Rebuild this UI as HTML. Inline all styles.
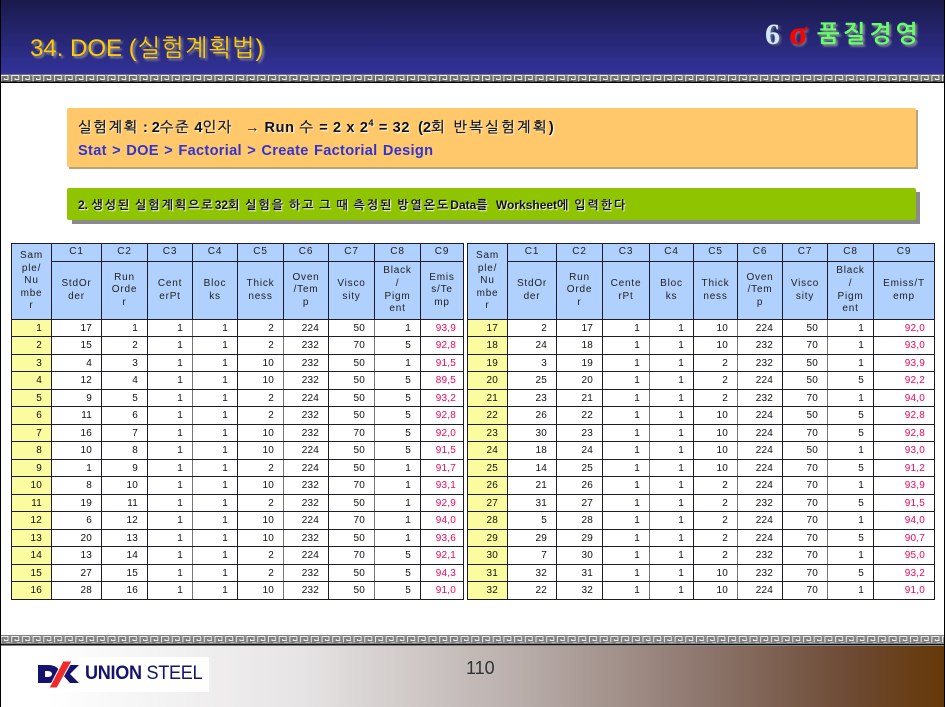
<!DOCTYPE html>
<html lang="ko"><head><meta charset="utf-8"><title>34. DOE</title>
<style>
html,body{margin:0;padding:0;background:#fff}
body{width:945px;height:707px;position:relative;overflow:hidden;font-family:"Liberation Sans","NanumGothic","Noto Sans CJK KR",sans-serif}
.abs{position:absolute;white-space:nowrap}
#hdr{left:0;top:0;width:945px;height:74px;background:linear-gradient(#1a1a4c,#32329a)}
#ftr{left:0;top:646px;width:945px;height:61px;background:linear-gradient(90deg,#fff 0%,#fff 5%,#e6e4e4 32%,#b9aeab 55%,#8a7268 76%,#6d4a34 90%,#663808 100%)}
table{position:absolute;top:243px;border-collapse:collapse;table-layout:fixed;font-size:10px;color:#111}
td{border:1px solid #1c1c2c;padding:0 9px 0 0;text-align:right;height:17px;line-height:11px;overflow:hidden;background:#fff;box-sizing:border-box;letter-spacing:.2px}
tr:nth-child(even) td{height:18px}
tr.h td{background:#b0d0fd;text-align:center;padding:0;letter-spacing:.8px;line-height:12.6px;color:#222}
tr.c td{height:18px}
tr.n td{height:58px}
td.s{background:#fbfb9f!important;padding-right:9px}
td.r{color:#f4045e;padding-right:7px}
.b td.r{padding-right:9px}
td.g{border-left-color:#777;border-right-color:#777}
.k1{letter-spacing:1.6px;font-weight:normal;-webkit-text-stroke:.3px #111}
.k2{letter-spacing:2px;word-spacing:-1.5px}
</style></head><body>
<div class="abs" id="hdr"></div>
<svg class="abs" style="left:0;top:74px" width="945" height="9"><defs><pattern id="k" width="10.7" height="8" patternUnits="userSpaceOnUse"><rect width="10.7" height="8" fill="#6e6e6e"/><path d="M1 7.5V1.5H8V5.5H4.5V4" fill="none" stroke="#eee" stroke-width="1"/><path d="M9.5 1.5H10.7M6 7.5H10" fill="none" stroke="#bbb" stroke-width="1"/></pattern></defs><rect width="945" height="7.5" fill="url(#k)"/><rect y="7.5" width="945" height="1.5" fill="#000"/></svg>
<svg class="abs" style="left:0;top:635px" width="945" height="11"><defs><pattern id="k2" width="10.7" height="9" patternUnits="userSpaceOnUse"><rect width="10.7" height="9" fill="#808080"/><path d="M1 7.5V1.5H8V5.5H4.5V4" fill="none" stroke="#eee" stroke-width="1"/><path d="M9.5 1.5H10.7M6 7.5H10" fill="none" stroke="#bbb" stroke-width="1"/></pattern></defs><rect width="945" height="9" fill="url(#k2)"/><rect y="9" width="945" height="1.5" fill="#111"/></svg>
<div class="abs" id="ftr"></div>
<div class="abs" style="left:0;top:0;width:1px;height:707px;background:#000"></div>
<div class="abs" style="left:944px;top:0;width:1px;height:707px;background:#000"></div>

<div class="abs" style="left:30px;top:35px;font-size:24px;line-height:28px;color:#ffcc00;text-shadow:2px 2px 2px #8f8f9c">34. DOE <span style="letter-spacing:1px">(실험계획법)</span></div>
<div class="abs" style="left:765px;top:18px;font:bold 30px/34px 'Liberation Serif',serif;color:#cfe6fb;text-shadow:2px 1px 2px #667">6</div>
<div class="abs" style="left:789px;top:17px;font:bold 34px/34px 'Liberation Serif',serif;color:#ff0000;text-shadow:1px 2px 2px #778">σ</div>
<div class="abs" style="left:817px;top:21px;font-size:24px;line-height:28px;font-weight:bold;letter-spacing:3.5px;color:#66ff66;text-shadow:2px 2px 2px #8f8f9c">품질경영</div>

<div class="abs" style="left:69px;top:110px;width:849px;height:59px;background:#b8a47c"></div>
<div class="abs" style="left:67px;top:108px;width:849px;height:59px;background:#ffc96b;border-radius:2px"></div>
<div class="abs" style="left:78px;top:118px;font-size:14.5px;line-height:20px;font-weight:bold;color:#111;text-shadow:1px 1px 1px #fff"><span class="k1">실험계획</span> : 2<span class="k1">수준</span> 4<span class="k1">인자</span> &nbsp;&nbsp;→<span style="letter-spacing:.65px;margin-left:5px">Run <span class="k1">수</span> = 2 x 2<sup style="font-size:9px;line-height:0">4</sup> = 32</span> &nbsp;(2<span class="k1" style="letter-spacing:2.3px">회 반복실험계획</span>)</div>
<div class="abs" style="left:78px;top:141px;font-size:14.6px;line-height:20px;font-weight:bold;color:#3333d0;word-spacing:1px;letter-spacing:.3px">Stat &gt; DOE &gt; Factorial &gt; Create Factorial Design</div>

<div class="abs" style="left:72px;top:192px;width:848px;height:32px;background:#8a8a8a"></div>
<div class="abs" style="left:67px;top:188px;width:849px;height:32px;background:#8fc400;border-radius:2px"></div>
<div class="abs" style="left:78px;top:197px;font-size:12px;line-height:16px;font-weight:bold;color:#111;text-shadow:1px 1px 1px #fff">2. <span class="k2">생성된 실험계획으로</span>32<span class="k2">회 실험을 하고 그 때 측정된 방열온도</span>Data<span class="k2">를</span><span style="margin-left:3px"> Worksheet</span><span class="k2">에 입력한다</span></div>

<table style="left:11px;width:452px"><colgroup><col style="width:40px"><col style="width:50px"><col style="width:46px"><col style="width:45px"><col style="width:45px"><col style="width:46px"><col style="width:45px"><col style="width:46px"><col style="width:46px"><col style="width:43px"></colgroup>
<tr class="h c"><td rowspan="2">Sam<br>ple/<br>Nu<br>mbe<br>r</td><td>C1</td><td>C2</td><td>C3</td><td>C4</td><td>C5</td><td>C6</td><td>C7</td><td>C8</td><td>C9</td></tr>
<tr class="h n"><td>StdOr<br>der</td><td>Run<br>Orde<br>r</td><td>Cent<br>erPt</td><td>Bloc<br>ks</td><td>Thick<br>ness</td><td>Oven<br>/Tem<br>p</td><td>Visco<br>sity</td><td>Black<br>/<br>Pigm<br>ent</td><td>Emis<br>s/Te<br>mp</td></tr>
<tr><td class="s">1</td><td>17</td><td>1</td><td class="g">1</td><td>1</td><td class="g">2</td><td>224</td><td class="g">50</td><td>1</td><td class="r">93,9</td></tr>
<tr><td class="s">2</td><td>15</td><td>2</td><td class="g">1</td><td>1</td><td class="g">2</td><td>232</td><td class="g">70</td><td>5</td><td class="r">92,8</td></tr>
<tr><td class="s">3</td><td>4</td><td>3</td><td class="g">1</td><td>1</td><td class="g">10</td><td>232</td><td class="g">50</td><td>1</td><td class="r">91,5</td></tr>
<tr><td class="s">4</td><td>12</td><td>4</td><td class="g">1</td><td>1</td><td class="g">10</td><td>232</td><td class="g">50</td><td>5</td><td class="r">89,5</td></tr>
<tr><td class="s">5</td><td>9</td><td>5</td><td class="g">1</td><td>1</td><td class="g">2</td><td>224</td><td class="g">50</td><td>5</td><td class="r">93,2</td></tr>
<tr><td class="s">6</td><td>11</td><td>6</td><td class="g">1</td><td>1</td><td class="g">2</td><td>232</td><td class="g">50</td><td>5</td><td class="r">92,8</td></tr>
<tr><td class="s">7</td><td>16</td><td>7</td><td class="g">1</td><td>1</td><td class="g">10</td><td>232</td><td class="g">70</td><td>5</td><td class="r">92,0</td></tr>
<tr><td class="s">8</td><td>10</td><td>8</td><td class="g">1</td><td>1</td><td class="g">10</td><td>224</td><td class="g">50</td><td>5</td><td class="r">91,5</td></tr>
<tr><td class="s">9</td><td>1</td><td>9</td><td class="g">1</td><td>1</td><td class="g">2</td><td>224</td><td class="g">50</td><td>1</td><td class="r">91,7</td></tr>
<tr><td class="s">10</td><td>8</td><td>10</td><td class="g">1</td><td>1</td><td class="g">10</td><td>232</td><td class="g">70</td><td>1</td><td class="r">93,1</td></tr>
<tr><td class="s">11</td><td>19</td><td>11</td><td class="g">1</td><td>1</td><td class="g">2</td><td>232</td><td class="g">50</td><td>1</td><td class="r">92,9</td></tr>
<tr><td class="s">12</td><td>6</td><td>12</td><td class="g">1</td><td>1</td><td class="g">10</td><td>224</td><td class="g">70</td><td>1</td><td class="r">94,0</td></tr>
<tr><td class="s">13</td><td>20</td><td>13</td><td class="g">1</td><td>1</td><td class="g">10</td><td>232</td><td class="g">50</td><td>1</td><td class="r">93,6</td></tr>
<tr><td class="s">14</td><td>13</td><td>14</td><td class="g">1</td><td>1</td><td class="g">2</td><td>224</td><td class="g">70</td><td>5</td><td class="r">92,1</td></tr>
<tr><td class="s">15</td><td>27</td><td>15</td><td class="g">1</td><td>1</td><td class="g">2</td><td>232</td><td class="g">50</td><td>5</td><td class="r">94,3</td></tr>
<tr><td class="s">16</td><td>28</td><td>16</td><td class="g">1</td><td>1</td><td class="g">10</td><td>232</td><td class="g">50</td><td>5</td><td class="r">91,0</td></tr>
</table>

<table class="b" style="left:467px;width:467px"><colgroup><col style="width:40px"><col style="width:49px"><col style="width:46px"><col style="width:47px"><col style="width:44px"><col style="width:44px"><col style="width:45px"><col style="width:45px"><col style="width:46px"><col style="width:61px"></colgroup>
<tr class="h c"><td rowspan="2">Sam<br>ple/<br>Nu<br>mbe<br>r</td><td>C1</td><td>C2</td><td>C3</td><td>C4</td><td>C5</td><td>C6</td><td>C7</td><td>C8</td><td>C9</td></tr>
<tr class="h n"><td>StdOr<br>der</td><td>Run<br>Orde<br>r</td><td>Cente<br>rPt</td><td>Bloc<br>ks</td><td>Thick<br>ness</td><td>Oven<br>/Tem<br>p</td><td>Visco<br>sity</td><td>Black<br>/<br>Pigm<br>ent</td><td>Emiss/T<br>emp</td></tr>
<tr><td class="s">17</td><td>2</td><td>17</td><td class="g">1</td><td>1</td><td class="g">10</td><td>224</td><td class="g">50</td><td>1</td><td class="r">92,0</td></tr>
<tr><td class="s">18</td><td>24</td><td>18</td><td class="g">1</td><td>1</td><td class="g">10</td><td>232</td><td class="g">70</td><td>1</td><td class="r">93,0</td></tr>
<tr><td class="s">19</td><td>3</td><td>19</td><td class="g">1</td><td>1</td><td class="g">2</td><td>232</td><td class="g">50</td><td>1</td><td class="r">93,9</td></tr>
<tr><td class="s">20</td><td>25</td><td>20</td><td class="g">1</td><td>1</td><td class="g">2</td><td>224</td><td class="g">50</td><td>5</td><td class="r">92,2</td></tr>
<tr><td class="s">21</td><td>23</td><td>21</td><td class="g">1</td><td>1</td><td class="g">2</td><td>232</td><td class="g">70</td><td>1</td><td class="r">94,0</td></tr>
<tr><td class="s">22</td><td>26</td><td>22</td><td class="g">1</td><td>1</td><td class="g">10</td><td>224</td><td class="g">50</td><td>5</td><td class="r">92,8</td></tr>
<tr><td class="s">23</td><td>30</td><td>23</td><td class="g">1</td><td>1</td><td class="g">10</td><td>224</td><td class="g">70</td><td>5</td><td class="r">92,8</td></tr>
<tr><td class="s">24</td><td>18</td><td>24</td><td class="g">1</td><td>1</td><td class="g">10</td><td>224</td><td class="g">50</td><td>1</td><td class="r">93,0</td></tr>
<tr><td class="s">25</td><td>14</td><td>25</td><td class="g">1</td><td>1</td><td class="g">10</td><td>224</td><td class="g">70</td><td>5</td><td class="r">91,2</td></tr>
<tr><td class="s">26</td><td>21</td><td>26</td><td class="g">1</td><td>1</td><td class="g">2</td><td>224</td><td class="g">70</td><td>1</td><td class="r">93,9</td></tr>
<tr><td class="s">27</td><td>31</td><td>27</td><td class="g">1</td><td>1</td><td class="g">2</td><td>232</td><td class="g">70</td><td>5</td><td class="r">91,5</td></tr>
<tr><td class="s">28</td><td>5</td><td>28</td><td class="g">1</td><td>1</td><td class="g">2</td><td>224</td><td class="g">70</td><td>1</td><td class="r">94,0</td></tr>
<tr><td class="s">29</td><td>29</td><td>29</td><td class="g">1</td><td>1</td><td class="g">2</td><td>224</td><td class="g">70</td><td>5</td><td class="r">90,7</td></tr>
<tr><td class="s">30</td><td>7</td><td>30</td><td class="g">1</td><td>1</td><td class="g">2</td><td>232</td><td class="g">70</td><td>1</td><td class="r">95,0</td></tr>
<tr><td class="s">31</td><td>32</td><td>31</td><td class="g">1</td><td>1</td><td class="g">10</td><td>232</td><td class="g">70</td><td>5</td><td class="r">93,2</td></tr>
<tr><td class="s">32</td><td>22</td><td>32</td><td class="g">1</td><td>1</td><td class="g">10</td><td>224</td><td class="g">70</td><td>1</td><td class="r">91,0</td></tr>
</table>

<div class="abs" style="left:33px;top:657px;width:176px;height:35px;background:#fff"></div>
<svg class="abs" style="left:37px;top:660px" width="44" height="30" viewBox="0 0 44 30"><path d="M1 5H11C19 5 23 9 23 14C23 19 19 23 11 23H1V17H10C13 17 15 16 15 14C15 12 13 11 10 11H1Z M1 11H8V17H1Z" fill="#14146e"/><path d="M42 5H33L25 14L33 23H42L33 14Z" fill="#14146e"/><path d="M35 1H26L12 28H20Z" fill="#ee2a2a" stroke="#fff" stroke-width="1"/></svg>
<div class="abs" style="left:85px;top:663px;font-size:19px;line-height:22px;color:#14146e;letter-spacing:-.3px;transform-origin:0 50%;transform:scaleX(.95)"><b>UNION</b> STEEL</div>
<div class="abs" style="left:466px;top:657px;font-size:18px;line-height:22px;color:#333;text-shadow:1px 1px 1px #bbb">110</div>
</body></html>
